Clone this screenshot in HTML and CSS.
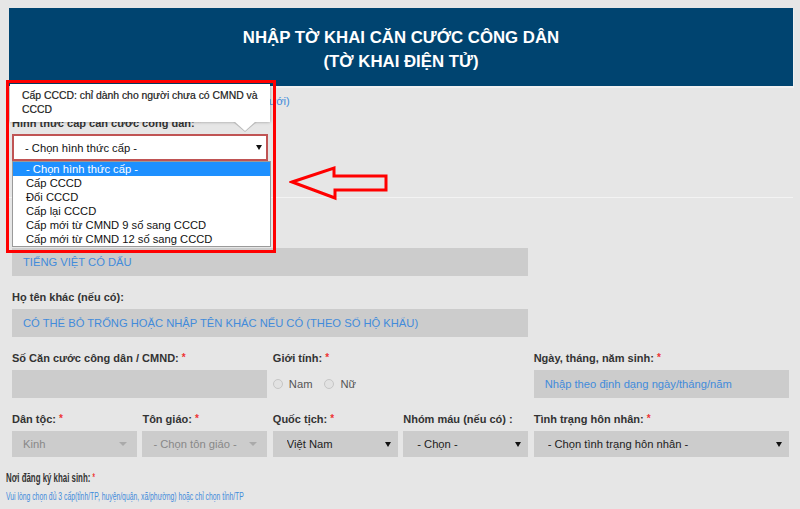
FILE: index.html
```html
<!DOCTYPE html>
<html lang="vi">

<head>
    <meta charset="UTF-8">
    <meta name="viewport" content="width=device-width, initial-scale=1.0">
    <title>Tờ khai căn cước công dân</title>
    <link rel="stylesheet" href="styles.css">
</head>

<body>
    <div class="wrap">
        <div class="head">
            <h1>NHẬP TỜ KHAI CĂN CƯỚC CÔNG DÂN<br>(TỜ KHAI ĐIỆN TỬ)</h1>
        </div>

        <div class="form">
            <p class="note">Mục có dấu * bắt buộc nhập <a href="#">(xem hướng dẫn bên dưới)</a></p>

            <div class="pick">
                <label class="lbl">Hình thức cấp căn cước công dân: <span class="req">*</span></label>
                <div class="pick-box">
                    <div class="sel sel-main">
                        <select>
                            <option>- Chọn hình thức cấp -</option>
                        </select>
                    </div>
                    <div class="tip">Cấp CCCD: chỉ dành cho người chưa có CMND và CCCD</div>
                    <ul class="opts">
                        <li class="on">- Chọn hình thức cấp -</li>
                        <li>Cấp CCCD</li>
                        <li>Đổi CCCD</li>
                        <li>Cấp lại CCCD</li>
                        <li>Cấp mới từ CMND 9 số sang CCCD</li>
                        <li>Cấp mới từ CMND 12 số sang CCCD</li>
                    </ul>
                </div>
            </div>

            <hr class="sep">

            <div class="row first">
                <div class="span4">
                    <label class="lbl">Họ, chữ đệm và tên khai sinh: <span class="req">*</span></label>
                    <input class="inp" type="text" placeholder="TIẾNG VIỆT CÓ DẤU">
                </div>
            </div>

            <div class="row">
                <div class="span4">
                    <label class="lbl">Họ tên khác (nếu có):</label>
                    <input class="inp" type="text" placeholder="CÓ THỂ BỎ TRỐNG HOẶC NHẬP TÊN KHÁC NẾU CÓ (THEO SỔ HỘ KHẨU)">
                </div>
            </div>

            <div class="row">
                <div class="span2">
                    <label class="lbl">Số Căn cước công dân / CMND: <span class="req">*</span></label>
                    <input class="inp" type="text">
                </div>
                <div class="span2">
                    <label class="lbl">Giới tính: <span class="req">*</span></label>
                    <div class="radios">
                        <label><input type="radio" name="gt"> Nam</label>
                        <label><input type="radio" name="gt"> Nữ</label>
                    </div>
                </div>
                <div class="span2">
                    <label class="lbl">Ngày, tháng, năm sinh: <span class="req">*</span></label>
                    <input class="inp" type="text" placeholder="Nhập theo định dạng ngày/tháng/năm">
                </div>
            </div>

            <div class="row">
                <div>
                    <label class="lbl">Dân tộc: <span class="req">*</span></label>
                    <div class="sel off">
                        <select disabled>
                            <option>Kinh</option>
                        </select>
                    </div>
                </div>
                <div>
                    <label class="lbl">Tôn giáo: <span class="req">*</span></label>
                    <div class="sel off">
                        <select disabled>
                            <option>- Chọn tôn giáo -</option>
                        </select>
                    </div>
                </div>
                <div>
                    <label class="lbl">Quốc tịch: <span class="req">*</span></label>
                    <div class="sel">
                        <select>
                            <option>Việt Nam</option>
                        </select>
                    </div>
                </div>
                <div>
                    <label class="lbl">Nhóm máu (nếu có) :</label>
                    <div class="sel">
                        <select>
                            <option>- Chọn -</option>
                        </select>
                    </div>
                </div>
                <div class="span2">
                    <label class="lbl">Tình trạng hôn nhân: <span class="req">*</span></label>
                    <div class="sel">
                        <select>
                            <option>- Chọn tình trạng hôn nhân -</option>
                        </select>
                    </div>
                </div>
            </div>

            <div class="foot">
                <label class="lbl">Nơi đăng ký khai sinh: <span class="req">*</span></label>
                <p class="hint">Vui lòng chọn đủ 3 cấp(tỉnh/TP, huyện/quận, xã/phường) hoặc chỉ chọn tỉnh/TP</p>
            </div>
        </div>
    </div>

    <!-- khung đánh dấu -->
    <div class="mark"></div>
    <svg class="arrow" width="100" height="36" viewBox="0 0 100 36">
        <polygon points="3,17 45,3 45,11 97,11 97,25 46,25 46,33" fill="none" stroke="#f00" stroke-width="3" />
    </svg>
</body>

</html>
```

FILE: styles.css
```css
body {
    margin: 0;
    background: #e6e6e6;
    font-family: "Liberation Sans", Arial, sans-serif;
    font-size: 11.2px;
    color: #333;
    position: relative;
}

.wrap {
    padding: 8px 7px 0 9px;
}

.head {
    background: #004470;
    color: #fff;
    text-align: center;
    padding: 18px 0 12px;
    box-shadow: 1px 2px 0 #f0f0f0;
}

.head h1 {
    margin: 0;
    font-size: 16.8px;
    line-height: 24px;
}

.form {
    padding: 0 4px 0 3px;
}

.note {
    margin: 8px 0 0;
    line-height: 14px;
}

.note a {
    color: #428bdb;
    text-decoration: none;
}

.lbl {
    display: block;
    font-size: 11px;
    font-weight: bold;
    line-height: 14px;
    margin-bottom: 5px;
    color: #333;
}

.req {
    color: #e33;
    font-size: 10px;
    vertical-align: top;
}

.pick {
    margin-top: 8px;
}

.pick .lbl {
    margin-bottom: 4px;
}

.pick-box {
    position: relative;
    width: 256px;
}

/* selects */
.sel {
    position: relative;
}

.sel select {
    -webkit-appearance: none;
    appearance: none;
    width: 100%;
    height: 26px;
    border: 0;
    border-radius: 0;
    background: #ccc;
    font-family: "Liberation Sans", Arial, sans-serif;
    font-size: 11.2px;
    color: #222;
    padding: 0 0 0 14px;
    outline: none;
}

.sel::after {
    content: "";
    position: absolute;
    right: 7px;
    top: 11px;
    border-left: 3px solid transparent;
    border-right: 3px solid transparent;
    border-top: 5px solid #111;
    pointer-events: none;
}

.sel.off select {
    color: #888;
    padding-left: 11px;
    opacity: 1;
}

.sel.off::after {
    right: 10px;
    border-left-width: 4px;
    border-right-width: 4px;
    border-top: 4px solid #aaa;
}

.sel-main select {
    height: 27px;
    background: #fff;
    border: 2px solid #c05454;
    padding-left: 11px;
    color: #111;
}

.sel-main::after {
    right: 6px;
}

.tip {
    position: absolute;
    left: -2px;
    top: -50px;
    width: 260px;
    box-sizing: border-box;
    background: #fff;
    padding: 5px 8px 5px 12px;
    font-size: 10.4px;
    line-height: 14px;
    color: #1a1a1a;
    -webkit-text-stroke: 0.2px #1a1a1a;
    box-shadow: 0 0 3px rgba(0, 0, 0, .35);
}

.tip::before,
.tip::after {
    content: "";
    position: absolute;
    top: 100%;
    border-style: solid;
    border-color: transparent;
}

.tip::before {
    left: 223px;
    border-width: 10px 12px 0;
    border-top-color: #bbb;
}

.tip::after {
    left: 224px;
    margin-top: -1px;
    border-width: 10px 11px 0;
    border-top-color: #fff;
}

.opts {
    position: absolute;
    top: 27px;
    left: 0;
    width: 257px;
    margin: 0;
    padding: 0;
    list-style: none;
    background: #fff;
    border: 1px solid #9a9a9a;
    z-index: 2;
}

.opts li {
    line-height: 14px;
    padding-left: 13px;
    color: #111;
}

.opts li.on {
    background: #1e90ff;
    color: #fff;
}

.sep {
    margin: 36px -4px 0 -3px;
    border: 0;
    border-top: 1px solid #f3f3f3;
    height: 0;
}

/* form rows */
.row {
    display: grid;
    grid-template-columns: repeat(6, 1fr);
    column-gap: 5.5px;
    margin-bottom: 14px;
}

.row.first {
    margin-top: 31px;
}

.span2 {
    grid-column: span 2;
}

.span4 {
    grid-column: span 4;
}

.inp {
    display: block;
    width: 100%;
    height: 28px;
    box-sizing: border-box;
    border: 0;
    background: #ccc;
    padding: 0 11px;
    font-family: "Liberation Sans", Arial, sans-serif;
    font-size: 11.2px;
    color: #333;
    outline: none;
}

.inp::placeholder {
    color: #428bdb;
}

.radios {
    display: flex;
    align-items: center;
    height: 28px;
}

.radios label {
    display: flex;
    align-items: center;
    margin-right: 12px;
    color: #555;
}

.radios input {
    -webkit-appearance: none;
    appearance: none;
    width: 10px;
    height: 10px;
    margin: 0 6px 0 0;
    border: 1px solid #c6c6c6;
    border-radius: 50%;
    background: #e2e2e2;
    box-sizing: border-box;
}

.foot {
    margin-left: -6px;
    transform: scaleX(.63);
    transform-origin: 0 0;
    width: 160%;
}

.foot .lbl {
    font-size: 12.5px;
    margin-bottom: 4px;
}

.hint {
    margin: 0;
    line-height: 14px;
    font-size: 10.8px;
    color: #428bdb;
}

/* annotation */
.mark {
    position: absolute;
    left: 6px;
    top: 80px;
    width: 270px;
    height: 173px;
    border: 3px solid #f00;
    box-sizing: border-box;
    z-index: 3;
}

.arrow {
    position: absolute;
    left: 289px;
    top: 165px;
}
```
